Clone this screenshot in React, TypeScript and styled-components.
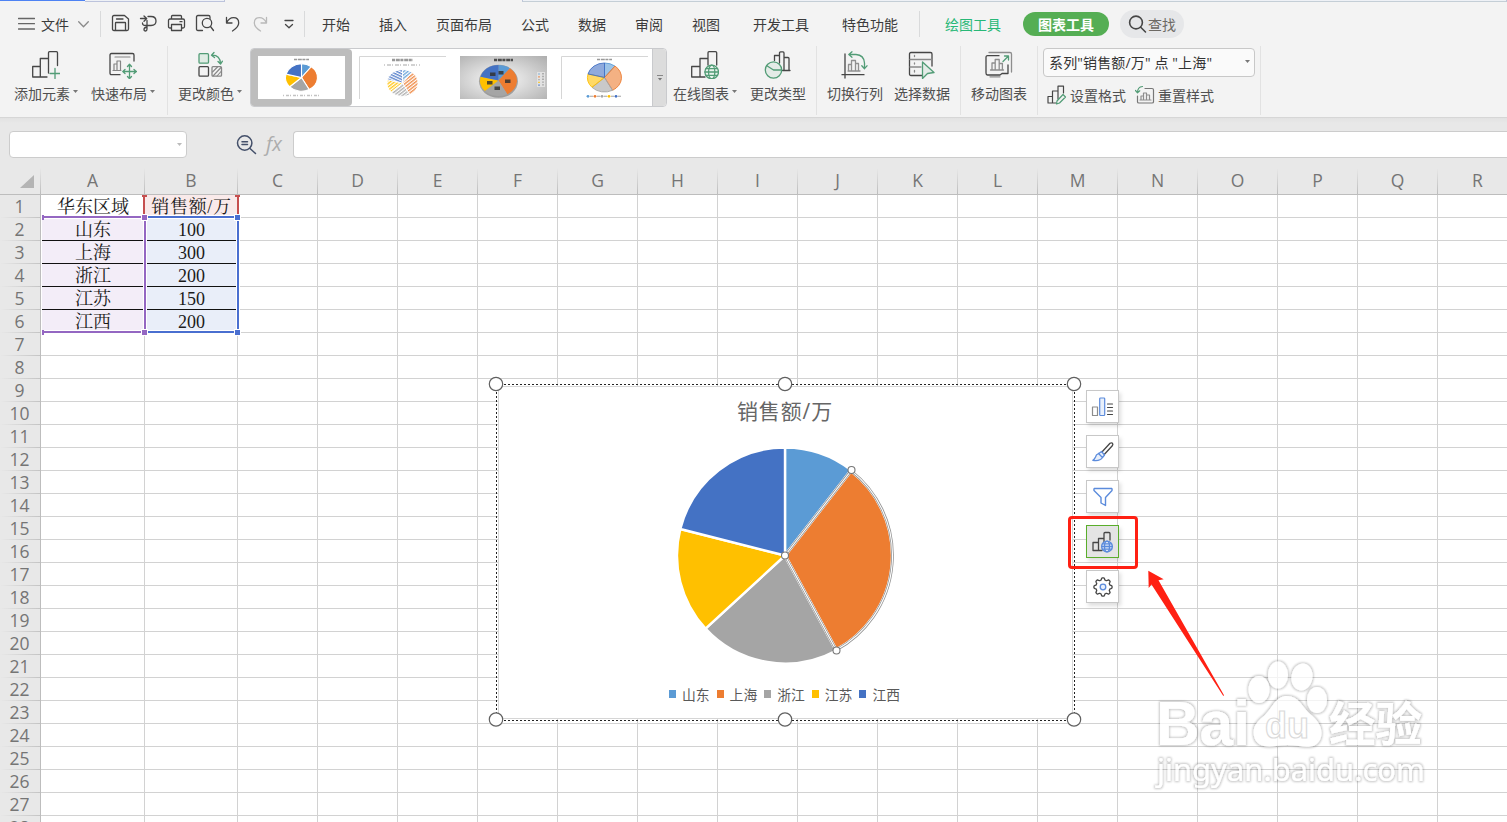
import React from "react";
import styled, { createGlobalStyle, css } from "styled-components";

const GlobalStyle = createGlobalStyle`
  * { box-sizing: border-box; }
  html, body { margin: 0; padding: 0; overflow: hidden; }
  body { font-family: "Noto Sans CJK SC", "Open Sans", sans-serif; color: #3d3d3d; background: #fff; }
`;

const INK = "#464646";
const GREEN = "#529c76";
const BLUE = "#5b8bdc";

const Window = styled.div`
  position: relative;
  width: 1507px;
  height: 822px;
  overflow: hidden;
  display: flex;
  flex-direction: column;
  background: #fff;
`;

/* ---------- document tab strip ---------- */
const TabStrip = styled.div`
  display: flex;
  flex: none;
  height: 2px;
  background: #f3f3f3;
`;
const ActiveTabEdge = styled.div`
  width: 85px;
  height: 1px;
  background: #4d82f3;
`;
const TabEdge = styled.div<{ $w?: number }>`
  ${(p) => (p.$w ? `width: ${p.$w}px;` : "flex: 1; margin-left: 297px;")}
  height: 2px;
  background: #eef1f6;
  border-right: 1px solid #bcc3d9;
  border-left: ${(p) => (p.$w ? 0 : 1)}px solid #bcc3d9;
  border-bottom: 1px solid ${(p) => (p.$w ? "#bcc3dc" : "#c4ced6")};
`;

/* ---------- menu row ---------- */
const MenuRow = styled.div`
  display: flex;
  flex: none;
  align-items: center;
  height: 44px;
  padding-left: 18px;
  background: #f3f3f3;
`;
const MenuText = styled.span<{ $gap?: number; $color?: string }>`
  margin-left: ${(p) => p.$gap ?? 29}px;
  font-size: 14px;
  line-height: 20px;
  white-space: nowrap;
  color: ${(p) => p.$color ?? "#3b3b3b"};
`;
const MenuChevron = styled.span`
  display: flex;
  margin-left: 9px;
`;
const MenuDivider = styled.div<{ $gap: number }>`
  width: 1px;
  height: 26px;
  margin-left: ${(p) => p.$gap}px;
  background: #d9dadb;
`;
const QuickIcons = styled.div`
  display: flex;
  align-items: center;
  gap: 8px;
  margin-left: 10px;
  svg { display: block; }
`;
const ActivePill = styled.div`
  margin-left: 22px;
  width: 86px;
  height: 24px;
  border-radius: 12px;
  background: #55ae54;
  color: #fff;
  font-size: 14px;
  font-weight: 700;
  line-height: 24px;
  text-align: center;
`;
const SearchPill = styled.div`
  display: flex;
  align-items: center;
  margin-left: 11px;
  width: 64px;
  height: 28px;
  padding-left: 8px;
  gap: 1px;
  border-radius: 14px;
  background: #e6e7e9;
  font-size: 14px;
  line-height: 20px;
  color: #6d6964;
  white-space: nowrap;
`;

/* ---------- ribbon ---------- */
const Ribbon = styled.div`
  display: flex;
  flex: none;
  height: 72px;
  background: #f3f3f3;
  border-bottom: 1px solid #d6d6d6;
`;
const ToolButton = styled.div<{ $gap: number; $menu?: boolean }>`
  flex: none;
  width: ${(p) => (p.$menu ? 64 : 56)}px;
  margin-left: ${(p) => p.$gap}px;
  padding-top: 5px;
  display: flex;
  flex-direction: column;
`;
const ToolIcon = styled.div`
  height: 30px;
  display: flex;
  justify-content: center;
`;
const ToolLabel = styled.div`
  display: flex;
  align-items: center;
  gap: 3px;
  margin-top: 2px;
  font-size: 14px;
  line-height: 20px;
  color: #505050;
  white-space: nowrap;
`;
const Caret = styled.i<{ $color?: string }>`
  flex: none;
  width: 5px;
  height: 3px;
  margin-top: -3px;
  clip-path: polygon(0 0, 100% 0, 50% 100%);
  background: ${(p) => p.$color ?? "#777"};
`;
const RibbonDivider = styled.div<{ $gap: number }>`
  flex: none;
  width: 1px;
  height: 69px;
  margin-left: ${(p) => p.$gap}px;
  background: #e2e2e2;
`;
const Gallery = styled.div`
  flex: none;
  display: flex;
  width: 417px;
  height: 59px;
  margin: 2px 0 0 8px;
  border: 1px solid #c9cacd;
  border-radius: 4px;
  background: #fff;
  overflow: hidden;
`;
const GalleryItem = styled.div<{ $selected?: boolean }>`
  flex: none;
  width: 101px;
  height: 57px;
  padding: 7px;
  background: ${(p) => (p.$selected ? "#bdbdbd" : "#fff")};
  border-radius: ${(p) => (p.$selected ? "0 4px 4px 0" : "0")};
  svg { display: block; background: #fff; }
`;
const GalleryMore = styled.div`
  display: flex;
  flex: none;
  flex-direction: column;
  align-items: center;
  justify-content: center;
  gap: 5px;
  width: 15px;
  margin-left: -3px;
  z-index: 1;
  background: #dcdcdc;
  border-left: 1px solid #c9cacd;
`;
const MoreBar = styled.i`
  flex: none;
  width: 6px;
  height: 1px;
  background: #888;
`;
const FormatPanel = styled.div`
  flex: none;
  width: 212px;
  margin: 2px 0 0 5px;
  display: flex;
  flex-direction: column;
`;
const ElementSelect = styled.div`
  display: flex;
  align-items: center;
  justify-content: space-between;
  height: 29px;
  padding: 1px 4px 0 5px;
  border: 1px solid #c8c8c8;
  border-radius: 4px;
  background: #fafafa;
  font-family: "Open Sans", "Noto Sans CJK SC", sans-serif;
  font-size: 14px;
  letter-spacing: 0.15px;
  line-height: 20px;
  color: #333;
  white-space: pre;
`;
const FormatActions = styled.div`
  display: flex;
  align-items: center;
  height: 36px;
  padding-left: 4px;
`;
const FormatAction = styled.div`
  display: flex;
  align-items: center;
  gap: 3px;
  margin-right: 9px;
  font-size: 14px;
  line-height: 20px;
  color: #505050;
  white-space: nowrap;
`;

/* ---------- formula bar ---------- */
const FormulaBar = styled.div`
  display: flex;
  flex: none;
  align-items: flex-start;
  height: 50px;
  padding: 13px 0 0 9px;
  background: linear-gradient(#e2e2e2, #e8e8e8 5px);
`;
const NameBox = styled.div`
  display: flex;
  align-items: center;
  justify-content: flex-end;
  width: 178px;
  height: 27px;
  padding: 3px 4px 0 0;
  border: 1px solid #cccccc;
  border-radius: 4px;
  background: #fff;
`;
const FormulaIcons = styled.div`
  display: flex;
  width: 56px;
  height: 27px;
  margin-left: 49px;
  align-items: center;
  gap: 9px;
`;
const FxLabel = styled.span`
  font-family: "Open Sans", sans-serif;
  font-style: italic;
  font-size: 20px;
  line-height: 22px;
  padding-bottom: 2px;
  color: #adadad;
`;
const FormulaInput = styled.div`
  flex: 1;
  height: 27px;
  margin-left: 1px;
  border: 1px solid #cccccc;
  border-right: 0;
  border-radius: 4px 0 0 4px;
  background: #fff;
`;

/* ---------- sheet ---------- */
const SheetRow = styled.div`
  display: flex;
  flex: none;
  width: 1517px;
  height: 23px;
`;
const HeaderRow = styled(SheetRow)`
  height: 27px;
  background: #e8e8e8;
  border-bottom: 1px solid #bdbdbd;
`;
const headFont = css`
  font-family: "Open Sans", sans-serif;
  font-size: 17.5px;
  color: #757575;
`;
const ColumnHead = styled.div<{ $w: number }>`
  ${headFont}
  flex: none;
  width: ${(p) => p.$w}px;
  height: 26px;
  line-height: 25px;
  padding-right: 1px;
  text-align: center;
  background: linear-gradient(#e8e8e8, #bcbcbc) right / 1px 100% no-repeat;
`;
const Corner = styled(ColumnHead)`
  display: flex;
  justify-content: flex-end;
  align-items: flex-end;
  padding: 0 7px 6px 0;
`;
const RowHead = styled.div`
  ${headFont}
  flex: none;
  width: 41px;
  line-height: 23px;
  padding-right: 1px;
  text-align: center;
  border-right: 1px solid #bdbdbd;
  background: linear-gradient(90deg, #e8e8e8, #c4c4c4) bottom / 100% 1px no-repeat #e8e8e8;
`;
const Cell = styled.div<{ $w: number }>`
  flex: none;
  width: ${(p) => p.$w}px;
  border-right: 1px solid #d2d2d2;
  border-bottom: 1px solid #d2d2d2;
  font-family: "Liberation Serif", "Noto Serif CJK SC", "Noto Sans CJK SC", serif;
  font-size: 18px;
  line-height: 25px;
  height: 23px;
  padding-left: 1px;
  text-align: center;
  color: #1b1b1b;
  white-space: nowrap;
`;
const DataCell = styled(Cell)<{ $fill: string; $rule?: boolean; $wide?: boolean }>`
  background: ${(p) => p.$fill};
  letter-spacing: ${(p) => (p.$wide ? 0.7 : 0)}px;
  border-bottom-color: ${(p) => (p.$rule ? "#111" : "#d2d2d2")};
`;

/* ---------- floating chart ---------- */
const Overlay = styled.svg<{ $x: number; $y: number }>`
  position: absolute;
  left: ${(p) => p.$x}px;
  top: ${(p) => p.$y}px;
  overflow: visible;
  pointer-events: none;
`;
const ChartObject = styled.div`
  position: absolute;
  left: 498px;
  top: 386px;
  width: 575px;
  height: 333px;
  display: flex;
  flex-direction: column;
  align-items: center;
  border: 1px solid #d6d6d6;
  background: #fff;
`;
const ChartTitle = styled.div`
  margin-top: 8px;
  padding-right: 1px;
  font-family: "Open Sans", "Noto Sans CJK SC", sans-serif;
  font-size: 21px;
  letter-spacing: 0.9px;
  line-height: 32px;
  color: #666;
`;
const PiePlot = styled.svg`
  flex: none;
  margin-top: 21px;
  margin-right: 1px;
  overflow: visible;
`;
const Legend = styled.div`
  display: flex;
  gap: 8px;
  margin-top: 20px;
  width: 233px;
`;
const LegendItem = styled.div<{ $color: string }>`
  display: flex;
  align-items: center;
  gap: 6px;
  width: 39.6px;
  font-size: 13.8px;
  line-height: 20px;
  color: #595959;
  white-space: nowrap;
  &::before {
    content: "";
    flex: none;
    width: 7px;
    height: 8px;
    background: ${(p) => p.$color};
  }
`;
const SideTools = styled.div`
  position: absolute;
  left: 1086px;
  top: 390px;
  display: flex;
  flex-direction: column;
  gap: 12px;
`;
const SideTool = styled.div<{ $active?: boolean }>`
  display: flex;
  align-items: center;
  justify-content: center;
  width: 33px;
  height: 33px;
  border: 1px solid ${(p) => (p.$active ? "#5aae2b" : "#c8c8c8")};
  background: ${(p) => (p.$active ? "#e4e4e4" : "#fff")};
  box-shadow: 2px 3px 4px rgba(0, 0, 0, 0.13);
`;
const HighlightBox = styled.div`
  position: absolute;
  left: 1068px;
  top: 516px;
  width: 70px;
  height: 53px;
  border: 3px solid #ff2013;
  border-radius: 4px;
`;

/* ---------- data ---------- */
type Region = { name: string; value: number; color: string };
const regions: Region[] = [
  { name: "山东", value: 100, color: "#5b9bd5" },
  { name: "上海", value: 300, color: "#ed7d31" },
  { name: "浙江", value: 200, color: "#a5a5a5" },
  { name: "江苏", value: 150, color: "#ffc000" },
  { name: "江西", value: 200, color: "#4472c4" },
];
const total = regions.reduce((s, r) => s + r.value, 0);

const columns = "ABCDEFGHIJKLMNOPQR".split("").map((name, i) => ({
  name,
  width: i === 0 ? 104 : i === 1 ? 93 : 80,
}));

function slicePath(index: number, cx: number, cy: number, rx: number, ry: number) {
  const before = regions.slice(0, index).reduce((s, r) => s + r.value, 0);
  const a = (before / total) * Math.PI * 2;
  const b = ((before + regions[index].value) / total) * Math.PI * 2;
  const pt = (t: number) => `${cx + Math.sin(t) * rx} ${cy - Math.cos(t) * ry}`;
  return `M${cx} ${cy}L${pt(a)}A${rx} ${ry} 0 0 1 ${pt(b)}Z`;
}

type ThumbKind = "plain" | "hatched" | "dark" | "soft";
function Thumb({ kind }: { kind: ThumbKind }) {
  const geo = {
    plain: [43.5, 21.5, 16, 13.7],
    hatched: [43.5, 27, 15.5, 13.5],
    dark: [38.5, 24.5, 18.5, 15.5],
    soft: [43.5, 21.5, 17, 14.5],
  }[kind];
  const [cx, cy, rx, ry] = geo;
  return (
    <svg width="87" height="43" viewBox="0 0 87 43">
      <defs>
        <radialGradient id="thumbShade" cx="45%" cy="55%" r="75%">
          <stop offset="0" stopColor="#fafafa" />
          <stop offset="1" stopColor="#b0b0b0" />
        </radialGradient>
        {regions.map((r, i) => (
          <pattern key={r.name} id={`hatch${i}`} width="3" height="2.6" patternUnits="userSpaceOnUse" patternTransform={i === 4 ? "rotate(25)" : "rotate(-38)"}>
            <rect width="3" height="1.4" fill={r.color} fillOpacity=".85" />
          </pattern>
        ))}
      </defs>
      {kind === "dark" && <rect width="87" height="43" fill="url(#thumbShade)" />}
      {(kind === "hatched" || kind === "soft") && <path d="M.5 43V.5H87" stroke="#d6d6d6" fill="none" />}
      <path
        d={kind === "dark" ? "M34 4H53" : kind === "hatched" ? "M33 4H54" : "M36 3.5H51"}
        stroke={kind === "dark" ? "#222" : "#777"}
        strokeWidth={kind === "dark" || kind === "hatched" ? 2.4 : 1.5}
        strokeDasharray="3 .8 4 .6"
        opacity=".75"
      />
      {kind === "dark" && <ellipse cx={cx} cy={cy + 0.8} rx={rx + 1} ry={ry + 1} fill="#777" opacity=".6" />}
      {regions.map((r, i) => (
        <path
          key={r.name}
          d={slicePath(i, cx, cy, rx, ry)}
          fill={kind === "hatched" ? `url(#hatch${i})` : r.color}
          fillOpacity={kind === "soft" ? 0.6 : 1}
          stroke={kind === "soft" ? r.color : kind === "dark" ? "none" : "#fff"}
          strokeWidth={kind === "plain" ? 1.1 : 0.9}
        />
      ))}
      {kind === "dark" && (
        <g fill="#333" fillOpacity=".85">
          <rect x="38.500" y="15" width="5" height="3.500" />
          <rect x="30" y="16.500" width="5.500" height="3.500" />
          <rect x="45" y="23.500" width="5.500" height="3.500" />
          <rect x="27" y="25" width="5.500" height="3.500" />
          <rect x="34.500" y="30.500" width="5.500" height="3.500" />
          <rect x="77" y="16" width="8" height="15" fill="#e2e2e2" fillOpacity="1" />
          {regions.map((r, i) => (
            <path key={r.name} d={`M78 ${18 + i * 2.8}h2`} stroke={r.color} strokeWidth="1.2" opacity=".7" />
          ))}
          <path d="M83 17v13" stroke="#999" strokeDasharray="1.400 1.400" strokeWidth="2" opacity=".7" />
        </g>
      )}
      {kind === "plain" && <path d="M25 39.500H61" stroke="#aaa" strokeWidth="1.300" strokeDasharray="1 2 3 1" opacity=".7" />}
      {kind === "hatched" && <path d="M25 9H61" stroke="#aaa" strokeWidth="1.500" strokeDasharray="1 2 4 1" opacity=".7" />}
      {kind === "soft" &&
        regions.map((r, i) => (
          <g key={r.name}>
            <circle cx={27 + i * 7} cy="40.300" r="1.400" fill={r.color} />
            <path d={`M${29 + i * 7} 40.300h3`} stroke="#888" strokeWidth="1.300" opacity=".6" />
          </g>
        ))}
    </svg>
  );
}

/* ---------- icons ---------- */
const Ico = ({ w = 28, h = 28, children, sw = 1.3, color = INK }: { w?: number; h?: number; children: React.ReactNode; sw?: number; color?: string }) => (
  <svg width={w} height={h} viewBox={`0 0 ${w} ${h}`} fill="none" stroke={color} strokeWidth={sw} strokeLinecap="round" strokeLinejoin="round">
    {children}
  </svg>
);

const AddElementIcon = () => (
  <Ico>
    <path d="M.7 25.500V15.500H8.300V26M.7 26H15M8.300 15.500V7.500H16.500V22M16.500 7.500V1.700Q16.500 .7 17.500 .7H24.500Q25.500 .7 25.500 1.700V14.500" />
    <path d="M23 17.500v10M18 22.500h10" stroke={GREEN} />
  </Ico>
);
const QuickLayoutIcon = () => (
  <Ico>
    <path d="M11 23.700H2.500Q1 23.700 1 22V4Q1 2.500 2.500 2.500H23.500Q25 2.500 25 4V10" />
    <path d="M6 6h15M5 19.500V13H8v6.500M8 19.500V10h3.500v9.500M4 19.500h8" stroke="#858585" strokeWidth="1.200" />
    <path d="M20.500 13.500v14M14 20.500h13.500M18.500 15.500l2-2.200 2 2.200M18.500 25.500l2 2.200 2-2.200M16 18.500l-2.200 2 2.200 2M25 18.500l2.200 2-2.200 2" stroke={GREEN} />
  </Ico>
);
const RecolorIcon = () => (
  <Ico w={26}>
    <rect x="2" y="2.700" width="9.500" height="9.500" rx="1" stroke={GREEN} fill="#dfece4" />
    <rect x="2" y="15.700" width="9.500" height="9.500" rx="1" />
    <rect x="15" y="15.700" width="9.500" height="9.500" rx="1" stroke="#868686" />
    <path d="M15.500 21l5-5M16 25l8-8.500M20 25l4.500-5" stroke="#868686" strokeWidth="1.100" />
    <path d="M17 1.500L14.500 4.200 17.500 6.500M15 4.200Q23 4 23.500 12.500M21 10.500l2.500 2.500 2-2.800" stroke={GREEN} />
  </Ico>
);
const Globe = ({ x, y, r, color, fill }: { x: number; y: number; r: number; color: string; fill: string }) => (
  <g stroke={color} fill="none">
    <circle cx={x} cy={y} r={r} fill={fill} />
    <ellipse cx={x} cy={y} rx={r * 0.46} ry={r} />
    <path d={`M${x - r} ${y}h${2 * r}M${x - r * 0.85} ${y - r * 0.5}h${r * 1.7}M${x - r * 0.85} ${y + r * 0.5}h${r * 1.7}`} />
  </g>
);
const OnlineChartIcon = () => (
  <Ico>
    <path d="M.7 26V15.500H9V26M.7 26H14M9 15.500V7.500H17M17 14V1.700Q17 .7 18 .7H24.500Q25.700 .7 25.700 1.700V14" />
    <Globe x={20.7} y={21} r={6.800} color={GREEN} fill="#e9f3ed" />
  </Ico>
);
const ChangeTypeIcon = () => (
  <Ico>
    <path d="M10.500 9.500V4.500H15.500M15.500 12V2Q15.500 .9 16.500 .9H19Q20 .9 20 2V19.500M20 6.500H24Q25 6.500 25 7.500V19.500M18.500 19.500H26" />
    <circle cx="9.500" cy="19" r="8.200" stroke={GREEN} fill="#e4ebe7" />
    <path d="M2.500 14.500L9.500 19H17.500" stroke={GREEN} />
  </Ico>
);
const SwapIcon = () => (
  <Ico>
    <path d="M4 3V27M1 23.700H23" />
    <path d="M7.500 20V13.500h3V20M10.500 20V9.500h4V20M14.500 20V12.500h3V20M7 20H19" stroke="#909090" />
    <path d="M11 .8L7.800 3.500 11 6.200M8 3.500H15Q23 4 23.500 12V17M20.800 14.800L23.500 17.700 26 14.800" stroke={GREEN} />
  </Ico>
);
const SelectDataIcon = () => (
  <Ico>
    <path d="M14 24.500H3Q1.500 24.500 1.500 23V3Q1.500 1.500 3 1.500H22.500Q24 1.500 24 3V15" />
    <path d="M2 8.500H24M2 16H13M6.500 4.500v1M6.500 12v1M6.500 19.500v1.500" stroke="#8a8a8a" />
    <path d="M14.500 11L26 21.500 19.500 22.500 14.500 27.500Z" stroke={GREEN} fill="#e4ebe7" />
  </Ico>
);
const MoveChartIcon = () => (
  <Ico>
    <path d="M14 4.700H2.500Q1 4.700 1 6.500V22Q1 24 2.500 24H15L17 22.500H23V14" />
    <path d="M4 1.500H25Q26.500 1.500 26.500 3V21M5 25.800H15" stroke="#8d8d8d" />
    <path d="M7 19V12h3.200v7M10.200 19V8.500h4V19M14.200 19v-6.500h3.200V19M5.500 19h13" stroke="#8d8d8d" />
    <path d="M18 10.500L23.500 5M19.500 5H23.500V9" stroke={GREEN} />
  </Ico>
);
const FormatIcon = () => (
  <Ico w={20} h={20} sw={1.200}>
    <path d="M1 17.500V11.500H5.500V18H1M5.500 11.500V6H11V14M5.500 18H9M11 6V1.200H16.500V8" />
    <path d="M10 16L16 9.500 18.500 12 12.500 18 9.500 19Z" stroke={GREEN} />
  </Ico>
);
const ResetIcon = () => (
  <Ico w={20} h={20} sw={1.200}>
    <path d="M10 3.500H17Q18.500 3.500 18.500 5V17Q18.500 18 17 18H4Q2.500 18 2.500 17V11" stroke="#777" />
    <path d="M6 15V11H8.500v4M8.500 15V8h3v7M11.500 15v-5h3v5M5 15h11" stroke="#8d8d8d" />
    <path d="M7.500 1.500Q2.500 2 2.500 7.500M.5 5.500l2 2.300 2.300-2" stroke={GREEN} />
  </Ico>
);

const SaveIcon = () => (
  <Ico w={20} h={20}>
    <path d="M1.500 3Q1.500 1.500 3 1.500H13.500L17.500 5V15Q17.500 16.500 16 16.500H3Q1.500 16.500 1.500 15ZM4.500 16V9Q4.500 8.500 5 8.500H14Q14.500 8.500 14.500 9V16M5.500 5H12" />
  </Ico>
);
const ExportIcon = () => (
  <Ico w={20} h={20}>
    <path d="M1.500 4.500H7.500M5 2L7.700 4.500 5 7.200M9 2.500H12Q17 2.500 17 7 17 11.500 12 11.500H6.500Q3.500 11.500 3.500 9M8 6.500V15Q8 17 6.500 17 5 17 5 15.500 5 13.500 8 13" />
  </Ico>
);
const PrintIcon = () => (
  <Ico w={20} h={20}>
    <path d="M4.500 5V2.500Q4.500 1.500 5.500 1.500H13.500Q14.500 1.500 14.500 2.500V5M4.500 14H3Q1.500 14 1.500 12.500V6.500Q1.500 5 3 5H16Q17.500 5 17.500 6.500V12.500Q17.500 14 16 14H14.500M4.500 10.500H14.500V16.500H4.500ZM13 7.700H15" />
  </Ico>
);
const PreviewIcon = () => (
  <Ico w={20} h={20}>
    <path d="M7.500 16.500H3Q1.500 16.500 1.500 15V3Q1.500 1.500 3 1.500H13.500Q15 1.500 15 3V4.500" />
    <circle cx="12" cy="9" r="4.700" />
    <path d="M15.500 12.500L18.500 16.500" />
  </Ico>
);
const UndoIcon = ({ redo }: { redo?: boolean }) => (
  <Ico w={20} h={20} color={redo ? "#b9b9b9" : INK}>
    <g transform={redo ? "translate(19 0) scale(-1 1)" : "translate(0 0)"}>
      <path d="M3.500 3.500V9H9M3.500 9Q6 3.700 10.500 3.700 15.700 3.700 15.700 9 15.700 13 9.500 17" />
    </g>
  </Ico>
);

const ChartElementsIcon = () => (
  <Ico w={24} h={24} sw={1.200}>
    <rect x="1.500" y="12" width="5" height="8.500" stroke="#8d8d8d" />
    <rect x="8.700" y="3" width="5" height="17.500" rx=".8" stroke={BLUE} fill="#e9f0fb" />
    <path d="M16.500 9h5M16.500 12.500h5M16.500 16h5M16.500 19.500h5" />
  </Ico>
);
const BrushIcon = () => (
  <Ico w={24} h={24} sw={1.300}>
    <path d="M10.500 12.500L19 3.300Q20.500 2.300 21.500 3.300 22.300 4.500 21.300 5.800L13 14.800" />
    <path d="M7.500 13.700L10.500 11.500 13.500 15 11.500 17.500M7.500 13.500Q5 14.500 4.500 17 3.500 19.500 1.800 20.300 9 21.500 11.500 17.500M7.500 13.500L11.500 17.500" stroke={BLUE} fill="#e9f0fb" />
  </Ico>
);
const FunnelIcon = () => (
  <Ico w={24} h={24} color={BLUE} sw={1.400}>
    <path d="M3.500 3.500H20.500Q21.500 4 21 5.500L14.500 12.500V20.500L10 18V12.500L3 5.500Q2.500 4 3.500 3.500Z" />
  </Ico>
);
const OnlineToolIcon = () => (
  <Ico w={24} h={24}>
    <path d="M2 20.500V12.500H7.500V20.500ZM7.500 12.500V8.500H13V12M7.500 20.500H11M13 11V3.500Q13 2.500 14 2.500H18Q19 2.500 19 3.500V10" />
    <Globe x={16} y={16.500} r={5.400} color={BLUE} fill="#dde7f8" />
  </Ico>
);
const gearPath = (() => {
  const points: string[] = [];
  for (let i = 0; i <= 96; i++) {
    const t = (i / 96) * Math.PI * 2;
    const r = 8.100 + 1 * Math.tanh(2.500 * Math.cos(8 * t));
    points.push(`${(12 + Math.sin(t) * r).toFixed(2)} ${(12 - Math.cos(t) * r).toFixed(2)}`);
  }
  return `M${points.join("L")}Z`;
})();
const GearIcon = () => (
  <Ico w={24} h={24}>
    <path d={gearPath} />
    <circle cx="12" cy="12" r="2.800" stroke={BLUE} fill="#e9f0fb" />
  </Ico>
);

const menuItems: [string, number][] = [
  ["开始", 17], ["插入", 29], ["页面布局", 29], ["公式", 29], ["数据", 29],
  ["审阅", 29], ["视图", 29], ["开发工具", 33], ["特色功能", 33],
];

function Tool({ icon, label, gap, menu }: { icon: React.ReactNode; label: string; gap: number; menu?: boolean }) {
  return (
    <ToolButton $gap={gap} $menu={menu}>
      <ToolIcon>{icon}</ToolIcon>
      <ToolLabel>
        {label}
        {menu && <Caret />}
      </ToolLabel>
    </ToolButton>
  );
}

function Sheet() {
  return (
    <>
      <HeaderRow>
        <Corner $w={41}>
          <svg width="14" height="13"><path d="M14 0V13H0Z" fill="#b4b4b4" /></svg>
        </Corner>
        {columns.map((c) => (
          <ColumnHead key={c.name} $w={c.width}>{c.name}</ColumnHead>
        ))}
      </HeaderRow>
      {Array.from({ length: 28 }, (_, r) => {
        const region = r >= 1 && r <= 5 ? regions[r - 1] : undefined;
        return (
          <SheetRow key={r}>
            <RowHead>{r + 1}</RowHead>
            {columns.map((c, i) => {
              if (r === 0 && i === 0) return <Cell key={c.name} $w={c.width}>华东区域</Cell>;
              if (r === 0 && i === 1) return <DataCell key={c.name} $w={c.width} $fill="#f9eaea" $wide>销售额/万</DataCell>;
              if (region && i < 2)
                return (
                  <DataCell key={c.name} $w={c.width} $fill={i ? "#e9eef9" : "#f3edf8"} $rule={r < 5}>
                    {i ? region.value : region.name}
                  </DataCell>
                );
              return <Cell key={c.name} $w={c.width} />;
            })}
          </SheetRow>
        );
      })}
    </>
  );
}

function RangeOutlines() {
  const purple = "#9467c2";
  const blue = "#4a6fd0";
  const red = "#c64f4f";
  return (
    <Overlay $x={41} $y={195} width="200" height="142" shapeRendering="crispEdges">
      <path d="M.5 22V140" stroke="#fff" />
      <path d="M1 22H103M1 137H103M104 22V137M197 22V137M104 22H196M104 137H196" stroke="#fff" strokeWidth="4" fill="none" />
      <path d="M1 22H103M1 137H103M104 22V137M1.500 20V25M1.500 135V140" stroke={purple} strokeWidth="2" fill="none" />
      <path d="M106 22H196M106 137H196M197 22V137" stroke={blue} strokeWidth="2" fill="none" />
      <path d="M103 2V19M197 2V19M101 1H106M194 1H199" stroke={red} strokeWidth="2" fill="none" />
      <g stroke="#fff">
        <rect x="100.500" y="19.500" width="6" height="6" fill={purple} />
        <rect x="100.500" y="134.500" width="6" height="6" fill={purple} />
        <rect x="193.500" y="19.500" width="6" height="6" fill={blue} />
        <rect x="193.500" y="134.500" width="6" height="6" fill={blue} />
      </g>
    </Overlay>
  );
}

function Pie() {
  const handles: [number, number][] = [[108, 107.500], [174.500, 22], [159.500, 202.500]];
  const selected = slicePath(1, 108, 107.500, 107.500, 107.500);
  return (
    <PiePlot width="216" height="216">
      {regions.map((r, i) => (
        <path key={r.name} d={slicePath(i, 108, 107.500, 108, 108)} fill={r.color} stroke="#fff" strokeWidth="2.400" strokeLinejoin="round" />
      ))}
      <path d={selected} fill="none" stroke="#fff" strokeWidth="3.400" />
      <path d={selected} fill="none" stroke="#909090" strokeWidth="2.600" />
      <path d={selected} fill="none" stroke="#fff" strokeWidth="1.100" />
      {handles.map(([x, y]) => (
        <circle key={x} cx={x} cy={y} r="3.500" fill="#fff" stroke="#777" strokeWidth="1.100" />
      ))}
    </PiePlot>
  );
}

function ChartFrame() {
  return (
    <Overlay $x={496} $y={384} width="579" height="337">
      <path d="M0 .5H579M0 336.500H579M.5 0V337M578.500 0V337" fill="none" stroke="#222" strokeDasharray="2 2" />
      {[0, 335.500].map((y) =>
        [0, 289, 578].map((x) => <circle key={`${x}-${y}`} cx={x} cy={y} r="6.700" fill="#fff" stroke="#606060" strokeWidth="1.200" />)
      )}
    </Overlay>
  );
}

function Watermark() {
  return (
    <Overlay $x={1150} $y={655} width="290" height="140">
      <defs>
        <filter id="soften" x="-5%" y="-5%" width="110%" height="110%">
          <feMorphology in="SourceAlpha" operator="dilate" radius="1" result="grow" />
          <feGaussianBlur in="grow" stdDeviation="0.8" result="halo" />
          <feComponentTransfer in="halo" result="fade"><feFuncA type="linear" slope="0.3" /></feComponentTransfer>
          <feMerge><feMergeNode in="fade" /><feMergeNode in="SourceGraphic" /></feMerge>
        </filter>
      </defs>
      <g filter="url(#soften)" fill="#fff" opacity=".75">
        <text x="6" y="90" fontFamily="Liberation Sans, sans-serif" fontWeight="700" fontSize="63" textLength="94" lengthAdjust="spacingAndGlyphs">Bai</text>
        <ellipse cx="109" cy="34.500" rx="10.500" ry="13.500" />
        <ellipse cx="128" cy="20" rx="10" ry="13.500" />
        <ellipse cx="152" cy="22" rx="10.500" ry="13.500" transform="rotate(10 152 22)" />
        <ellipse cx="167" cy="45" rx="10" ry="13" />
        <path d="M137 41C149 41 153 53 160 59C169 66 173 74 171 82C168 93 157 93 149 91Q137 89 126 91C116 93 106 91 104 81C102 71 108 66 115 60C122 53 126 41 137 41Z" />
        <text x="179" y="86" fontFamily="Noto Sans CJK SC, sans-serif" fontWeight="700" fontSize="47" textLength="93" lengthAdjust="spacingAndGlyphs">经验</text>
        <text x="7" y="126" fontFamily="Noto Sans, sans-serif" fontSize="30" textLength="268" lengthAdjust="spacingAndGlyphs">jingyan.baidu.com</text>
      </g>
      <text x="115" y="83" fontFamily="Liberation Sans, sans-serif" fontWeight="700" fontSize="37" textLength="44" lengthAdjust="spacingAndGlyphs" fill="#fff" stroke="#dadada" strokeWidth="1.200">du</text>
    </Overlay>
  );
}

export default function App() {
  return (
    <Window>
      <GlobalStyle />
      <TabStrip>
        <ActiveTabEdge />
        <TabEdge $w={140} />
        <TabEdge />
      </TabStrip>

      <MenuRow>
        <Ico w={17} h={14} color="#666"><path d="M.5 1.500H16.500M.5 6.700H16.500M.5 12H16.500" /></Ico>
        <MenuText $gap={6}>文件</MenuText>
        <MenuChevron>
          <Ico w={11} h={7} color="#8a8a8a"><path d="M.7 .8L5.500 5.700 10.300 .8" /></Ico>
        </MenuChevron>
        <MenuDivider $gap={11} />
        <QuickIcons>
          <SaveIcon />
          <ExportIcon />
          <PrintIcon />
          <PreviewIcon />
          <UndoIcon />
          <UndoIcon redo />
          <Ico w={20} h={20}><path d="M6 6.500H14M6.500 10.500L10 13.700 13.500 10.500" /></Ico>
        </QuickIcons>
        <MenuDivider $gap={5} />
        {menuItems.map(([label, gap]) => (
          <MenuText key={label} $gap={gap}>{label}</MenuText>
        ))}
        <MenuDivider $gap={21} />
        <MenuText $gap={25} $color="#28b877">绘图工具</MenuText>
        <ActivePill>图表工具</ActivePill>
        <SearchPill>
          <Ico w={19} h={19} sw={1.600}><circle cx="8" cy="7.500" r="6.400" /><path d="M12.700 12.300L17.500 17" /></Ico>
          查找
        </SearchPill>
      </MenuRow>

      <Ribbon>
        <Tool gap={14} menu label="添加元素" icon={<AddElementIcon />} />
        <Tool gap={13} menu label="快速布局" icon={<QuickLayoutIcon />} />
        <RibbonDivider $gap={12} />
        <Tool gap={10} menu label="更改颜色" icon={<RecolorIcon />} />
        <Gallery>
          <GalleryItem $selected><Thumb kind="plain" /></GalleryItem>
          <GalleryItem><Thumb kind="hatched" /></GalleryItem>
          <GalleryItem><Thumb kind="dark" /></GalleryItem>
          <GalleryItem><Thumb kind="soft" /></GalleryItem>
          <GalleryMore>
            <MoreBar />
            <Caret />
          </GalleryMore>
        </Gallery>
        <Tool gap={6} menu label="在线图表" icon={<OnlineChartIcon />} />
        <Tool gap={13} label="更改类型" icon={<ChangeTypeIcon />} />
        <RibbonDivider $gap={10} />
        <Tool gap={10} label="切换行列" icon={<SwapIcon />} />
        <Tool gap={11} label="选择数据" icon={<SelectDataIcon />} />
        <RibbonDivider $gap={10} />
        <Tool gap={10} label="移动图表" icon={<MoveChartIcon />} />
        <RibbonDivider $gap={10} />
        <FormatPanel>
          <ElementSelect>
            {'系列"销售额/万" 点 "上海"'}
            <Caret />
          </ElementSelect>
          <FormatActions>
            <FormatAction><FormatIcon /><span>设置格式</span></FormatAction>
            <FormatAction><ResetIcon /><span>重置样式</span></FormatAction>
          </FormatActions>
        </FormatPanel>
        <RibbonDivider $gap={5} />
      </Ribbon>

      <FormulaBar>
        <NameBox><Caret $color="#bbb" /></NameBox>
        <FormulaIcons>
          <Ico w={21} h={21} color="#44506a" sw={1.500}>
            <circle cx="8.700" cy="9" r="7.200" />
            <path d="M14 14.500L19.500 19.500M6 7.700H11.500M6 10.500H11.500" />
          </Ico>
          <FxLabel>fx</FxLabel>
        </FormulaIcons>
        <FormulaInput />
      </FormulaBar>

      <Sheet />

      <RangeOutlines />
      <ChartObject>
        <ChartTitle>销售额/万</ChartTitle>
        <Pie />
        <Legend>
          {regions.map((r) => (
            <LegendItem key={r.name} $color={r.color}>{r.name}</LegendItem>
          ))}
        </Legend>
      </ChartObject>
      <ChartFrame />
      <SideTools>
        <SideTool><ChartElementsIcon /></SideTool>
        <SideTool><BrushIcon /></SideTool>
        <SideTool><FunnelIcon /></SideTool>
        <SideTool $active><OnlineToolIcon /></SideTool>
        <SideTool><GearIcon /></SideTool>
      </SideTools>
      <HighlightBox />
      <Watermark />
      <Overlay $x={1148} $y={570} width="77" height="127">
        <path d="M.3 .7L15.700 9.300 10.500 10.200 76 125.300 75.300 126 3.500 14.500 .7 18Z" fill="#ff2013" />
      </Overlay>
    </Window>
  );
}
